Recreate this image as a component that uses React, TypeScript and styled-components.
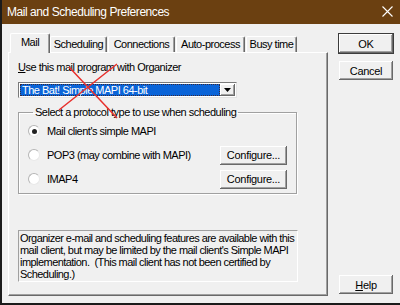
import React from "react";
import styled, { createGlobalStyle } from "styled-components";

const GlobalStyle = createGlobalStyle`
  html, body {
    margin: 0;
    padding: 0;
    background: #1b1b1b;
  }
  * {
    box-sizing: border-box;
  }
`;

const tabs = [
  { label: "Mail", width: 40 },
  { label: "Scheduling", width: 57 },
  { label: "Connections", width: 67 },
  { label: "Auto-process", width: 69 },
  { label: "Busy time", width: 51 },
];

const infoLines = [
  "Organizer e-mail and scheduling features are available with this",
  "mail client, but may be limited by the mail client's Simple MAPI",
  "implementation.\u00a0 (This mail client has not been certified by",
  "Scheduling.)",
];

const Window = styled.div`
  position: relative;
  width: 400px;
  height: 305px;
  display: flex;
  flex-direction: column;
  border-left: 2px solid #1b1b1b;
  border-bottom: 2px solid #1b1b1b;
  background: #f0f0f0;
  font-family: "Liberation Sans", Arial, sans-serif;
  font-size: 11px;
  letter-spacing: -0.5px;
  color: #000;
  overflow: hidden;
`;

const TitleBar = styled.div`
  height: 24px;
  flex: none;
  display: flex;
  align-items: center;
  justify-content: space-between;
  padding: 0 7px 1px 5px;
  background: #6b4011;
  color: #fff;
  font-size: 12px;
  letter-spacing: -0.45px;
`;

const Body = styled.div`
  flex: 1;
  display: flex;
  padding: 9px 0 7px 6px;
  gap: 10px;
`;

const TabArea = styled.div`
  width: 320px;
  display: flex;
  flex-direction: column;
`;

const TabRow = styled.div`
  height: 19px;
  display: flex;
  align-items: flex-end;
  padding-left: 2px;
  position: relative;
  z-index: 1;
`;

const Tab = styled.div<{ $w: number; $active?: boolean }>`
  width: ${(p) => p.$w}px;
  height: ${(p) => (p.$active ? 20 : 16)}px;
  margin-bottom: ${(p) => (p.$active ? -1 : 0)}px;
  display: flex;
  align-items: center;
  justify-content: center;
  padding-bottom: ${(p) => (p.$active ? 3 : 1)}px;
  background: #f0f0f0;
  border-top: 1px solid #fff;
  border-left: 1px solid #fff;
  border-right: 1px solid #696969;
  box-shadow: inset -1px 0 #a0a0a0;
  border-radius: 2px 2px 0 0;
  margin-right: ${(p) => (p.$active ? 0 : 1)}px;
`;

const Panel = styled.div`
  flex: 1;
  display: flex;
  flex-direction: column;
  padding: 8px 8px 0 9px;
  border-top: 1px solid #fff;
  border-left: 1px solid #fff;
  border-right: 1px solid #696969;
  border-bottom: 1px solid #696969;
  box-shadow: inset -1px -1px #a0a0a0;
`;

const Label = styled.div`
  line-height: 13px;
  height: 13px;
`;

const Key = styled.span`
  text-decoration: underline;
`;

const Select = styled.div`
  margin-top: 8px;
  width: 219px;
  height: 16px;
  display: flex;
  background: #fff;
  border: 1px solid #7a7a7a;
  border-right-color: #e3e3e3;
  border-bottom-color: #e3e3e3;
  padding: 1px;
`;

const Chosen = styled.div`
  flex: 1;
  background: #0a64d8;
  color: #fff;
  line-height: 12px;
  padding-left: 2px;
  outline: 1px dotted #3a2a3a;
  outline-offset: -1px;
`;

const DropButton = styled.div`
  width: 15px;
  display: flex;
  align-items: center;
  justify-content: center;
  background: #f0f0f0;
  box-shadow: inset -1px -1px #696969, inset 1px 1px #fff, inset -2px -2px #a0a0a0;
`;

const Group = styled.fieldset`
  margin: 8px 0 0 0;
  width: 279px;
  padding: 1px 8px 3px 9px;
  border: 1px solid #a0a0a0;
  box-shadow: inset 1px 1px #fff, 1px 1px #fff;
  display: flex;
  flex-direction: column;
  gap: 2px;
`;

const Legend = styled.legend`
  padding: 0 2px;
  margin-left: 5px;
  line-height: 13px;
`;

const OptionRow = styled.div`
  height: 22px;
  display: flex;
  align-items: center;
`;

const Radio = styled.span<{ $on?: boolean }>`
  width: 12px;
  height: 12px;
  border-radius: 50%;
  flex: none;
  margin-right: 7px;
  background: #fff;
  border: 1px solid #b5b5b5;
  border-right-color: #e8e8e8;
  border-bottom-color: #e8e8e8;
  display: flex;
  align-items: center;
  justify-content: center;
  &::after {
    content: "";
    width: 5px;
    height: 5px;
    border-radius: 50%;
    background: ${(p) => (p.$on ? "#222" : "transparent")};
  }
`;

const OptionText = styled.span`
  flex: 1;
`;

const Button = styled.div<{ $w?: number; $default?: boolean }>`
  width: ${(p) => p.$w ?? 56}px;
  height: 21px;
  display: flex;
  align-items: center;
  justify-content: center;
  background: #f0f0f0;
  border: 1px solid ${(p) => (p.$default ? "#3c3c3c" : "transparent")};
  box-shadow: inset -1px -1px #696969, inset 1px 1px #fff, inset -2px -2px #a0a0a0;
  letter-spacing: -0.3px;
`;

const InfoBox = styled.div`
  margin-top: 36px;
  width: 280px;
  height: 52px;
  padding: 1px 0 0 1px;
  border: 1px solid #a0a0a0;
  border-right-color: #fff;
  border-bottom-color: #fff;
  line-height: 12px;
  letter-spacing: -0.55px;
  overflow: hidden;
`;

const InfoLine = styled.div`
  white-space: nowrap;
`;

const ButtonColumn = styled.div`
  width: 56px;
  display: flex;
  flex-direction: column;
  gap: 6px;
  padding-bottom: 1px;
`;

const Spacer = styled.div`
  flex: 1;
`;

const Scribble = styled.svg`
  position: absolute;
  left: 0;
  top: 0;
  pointer-events: none;
`;

export default function App() {
  return (
    <>
      <GlobalStyle />
      <Window>
        <TitleBar>
          <span>Mail and Scheduling Preferences</span>
          <svg width="11" height="11" viewBox="0 0 11 11">
            <path d="M0.5 0.5 L10.5 10.5 M10.5 0.5 L0.5 10.5" stroke="#fff" strokeWidth="1.1" />
          </svg>
        </TitleBar>
        <Body>
          <TabArea>
            <TabRow>
              {tabs.map((t, i) => (
                <Tab key={t.label} $w={t.width} $active={i === 0}>
                  {t.label}
                </Tab>
              ))}
            </TabRow>
            <Panel>
              <Label>
                <Key>U</Key>se this mail program with Organizer
              </Label>
              <Select>
                <Chosen>The Bat! Simple MAPI 64-bit</Chosen>
                <DropButton>
                  <svg width="7" height="4" viewBox="0 0 7 4">
                    <path d="M0 0 H7 L3.5 4 Z" fill="#000" />
                  </svg>
                </DropButton>
              </Select>
              <Group>
                <Legend>Select a protocol type to use when scheduling</Legend>
                <OptionRow>
                  <Radio $on />
                  <OptionText>Mail client's simple MAPI</OptionText>
                </OptionRow>
                <OptionRow>
                  <Radio />
                  <OptionText>POP3 (may combine with MAPI)</OptionText>
                  <Button $w={69}>Configure...</Button>
                </OptionRow>
                <OptionRow>
                  <Radio />
                  <OptionText>IMAP4</OptionText>
                  <Button $w={69}>Configure...</Button>
                </OptionRow>
              </Group>
              <InfoBox>
                {infoLines.map((line) => (
                  <InfoLine key={line}>{line}</InfoLine>
                ))}
              </InfoBox>
            </Panel>
          </TabArea>
          <ButtonColumn>
            <Button $default>OK</Button>
            <Button>Cancel</Button>
            <Spacer />
            <Button>
              <span>
                <Key>H</Key>elp
              </span>
            </Button>
          </ButtonColumn>
        </Body>
        <Scribble width="400" height="305">
          <path d="M67 67 L115 118 M115 64 L57 110" stroke="#e8302c" strokeWidth="1.5" fill="none" />
        </Scribble>
      </Window>
    </>
  );
}
